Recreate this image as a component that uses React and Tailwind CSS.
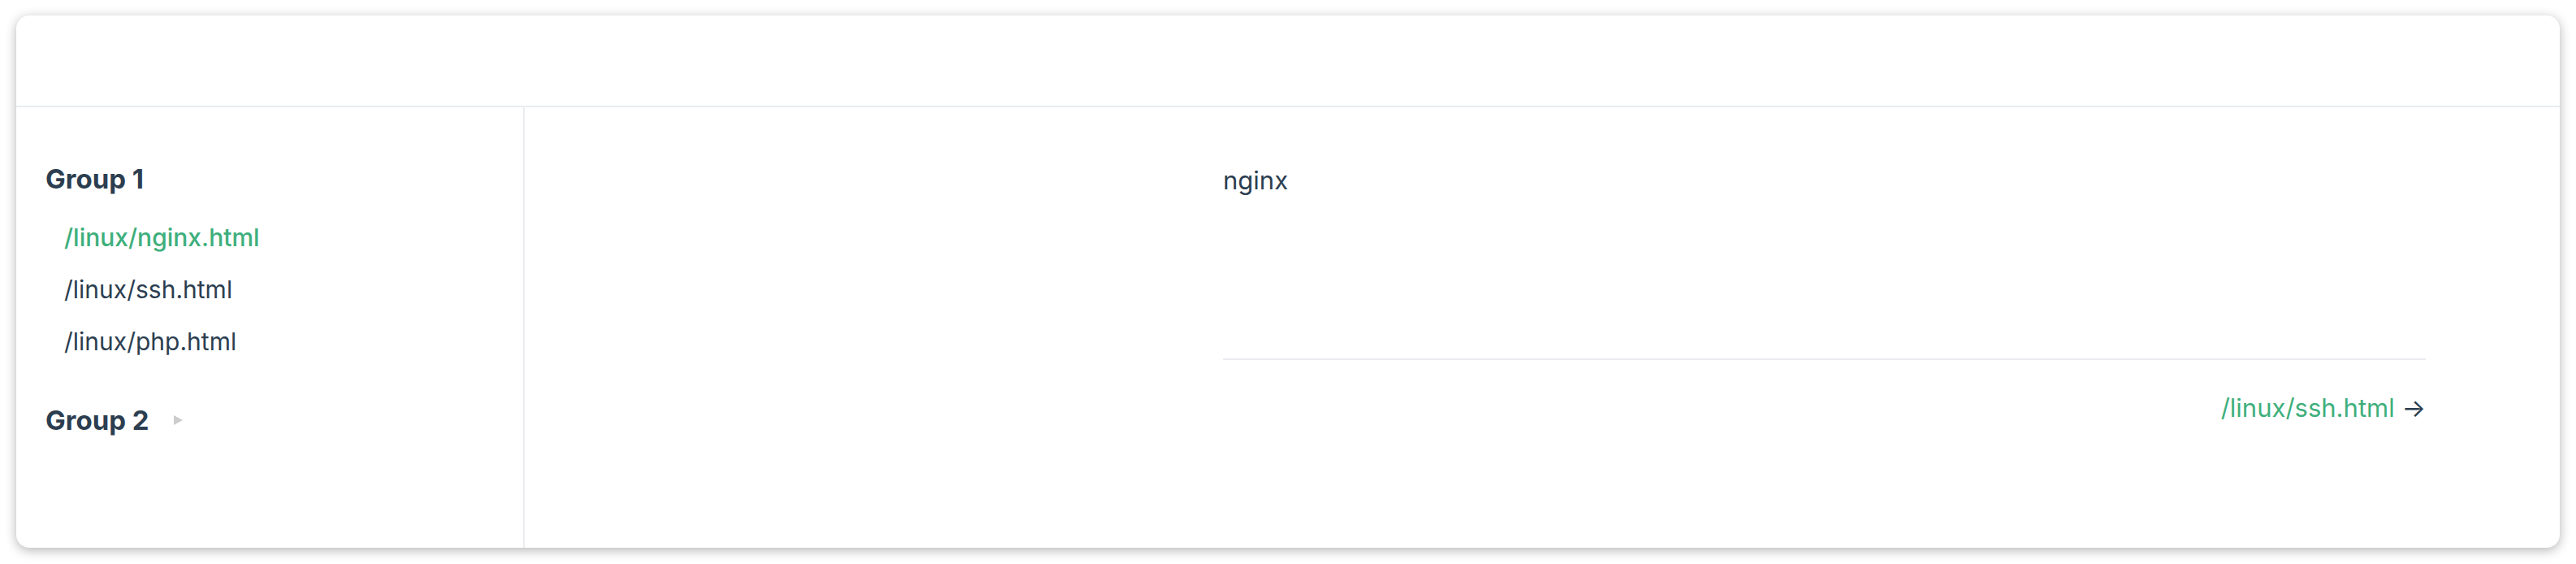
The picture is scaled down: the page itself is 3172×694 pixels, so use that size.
import { useState } from 'react'

const groups = [
  {
    title: 'Group 1',
    open: true,
    links: ['/linux/nginx.html', '/linux/ssh.html', '/linux/php.html'],
  },
  { title: 'Group 2', open: false, links: [] },
]

function Sidebar({ active }) {
  return (
    <aside className="w-[626px] shrink-0 border-r-2 border-[#eaecef] pt-[68px]">
      {groups.map((group, i) => (
        <div key={group.title} className={i > 0 ? 'mt-[45px]' : ''}>
          <div className="flex items-center pl-[36px] text-[33px] leading-[40px] font-bold text-[#2c3e50]">
            <span>{group.title}</span>
            {!group.open && (
              <span className="ml-[30px] w-0 h-0 border-l-[11px] border-l-[#cccccc] border-y-[6px] border-y-transparent" />
            )}
          </div>
          {group.open && (
            <ul className="mt-[20px]">
              {group.links.map((link) => (
                <li key={link}>
                  <a
                    className={
                      link === active
                        ? 'block pl-[59px] py-[11px] text-[30px] leading-[42px] font-medium text-[#3eaf7c]'
                        : 'block pl-[59px] py-[11px] text-[30px] leading-[42px] text-[#2c3e50]'
                    }
                  >
                    {link}
                  </a>
                </li>
              ))}
            </ul>
          )}
        </div>
      ))}
    </aside>
  )
}

export default function App() {
  const [active] = useState('/linux/nginx.html')

  return (
    <div className="h-[694px] w-[3172px] bg-white pt-[19px] pl-[20px] font-['Inter','Noto_Sans',sans-serif]">
      <div className="w-[3132px] h-[655px] rounded-[16px] bg-white overflow-hidden shadow-[0_3px_14px_rgba(0,0,0,0.3)] flex flex-col">
        <header className="h-[113px] shrink-0 border-b-2 border-[#eaecef]" />
        <div className="flex flex-1">
          <Sidebar active={active} />
          <main className="flex-1 pl-[860px] pt-[67px]">
            <div className="w-[1481px]">
              <p className="text-[31px] leading-[46px] text-[#2c3e50]">nginx</p>
              <div className="mt-[196px] border-t-2 border-[#eaecef] pt-[35px] flex justify-end">
                <span className="text-[31px] leading-[48px]">
                  <a className="text-[#3eaf7c]">/linux/ssh.html</a>
                  <span className="text-[#2c3e50]"> →</span>
                </span>
              </div>
            </div>
          </main>
        </div>
      </div>
    </div>
  )
}
